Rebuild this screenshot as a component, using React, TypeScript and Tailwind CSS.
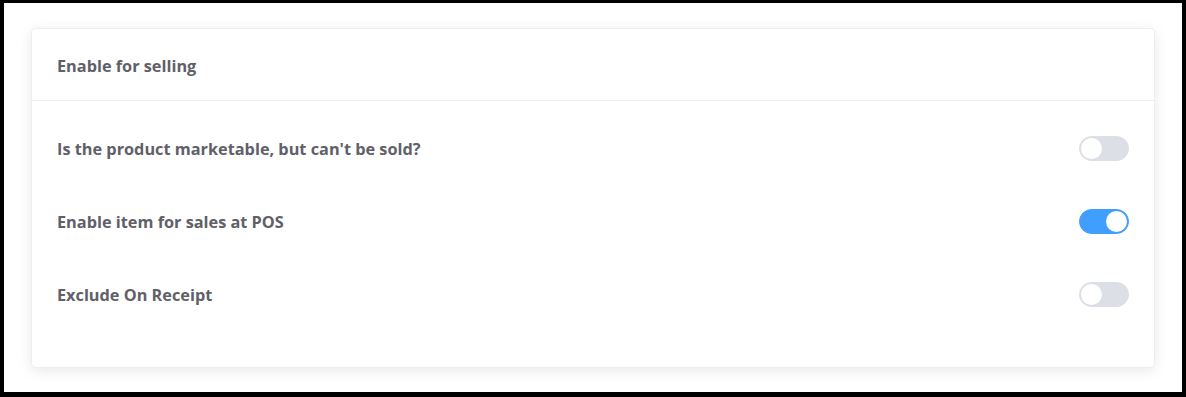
import React, { useState } from "react";

function Toggle({ on }: { on: boolean }) {
  const [v, setV] = useState(on);
  return (
    <button
      onClick={() => setV(!v)}
      className={`relative h-[25px] w-[50px] shrink-0 rounded-full border ${v ? "border-[#409eff] bg-[#409eff]" : "border-[#dcdfe6] bg-[#dcdfe6]"}`}
    >
      <span
        className={`absolute top-[1px] h-[21px] w-[21px] rounded-full bg-white ${v ? "left-[26px]" : "left-[1px]"}`}
      />
    </button>
  );
}

const rows = [
  { label: "Is the product marketable, but can't be sold?", on: false },
  { label: "Enable item for sales at POS", on: true },
  { label: "Exclude On Receipt", on: false },
];

export default function App() {
  return (
    <div className="min-h-[397px] w-[1186px] bg-black pt-[3px] pl-[4px] pr-[4px] pb-[5px]">
      <div className="h-[389px] bg-white px-[27px] pt-[25px]" style={{ fontFamily: '"Open Sans", "Noto Sans", sans-serif' }}>
        <div className="rounded-[4px] border border-[#ebeef5] bg-white shadow-[0_3px_14px_0_rgba(0,0,0,0.09)]">
          <div className="flex h-[72px] items-center border-b border-[#ebeef5] px-[25px] pt-[3px] text-[16.3px] font-bold text-[#5f6068]">
            Enable for selling
          </div>
          <div className="px-[25px] pt-[11px] pb-[36px]">
            {rows.map((r) => (
              <div key={r.label} className="flex h-[73px] items-center justify-between">
                <span className="pt-[1px] text-[16.3px] font-bold text-[#5f6068]">{r.label}</span>
                <Toggle on={r.on} />
              </div>
            ))}
          </div>
        </div>
      </div>
    </div>
  );
}
